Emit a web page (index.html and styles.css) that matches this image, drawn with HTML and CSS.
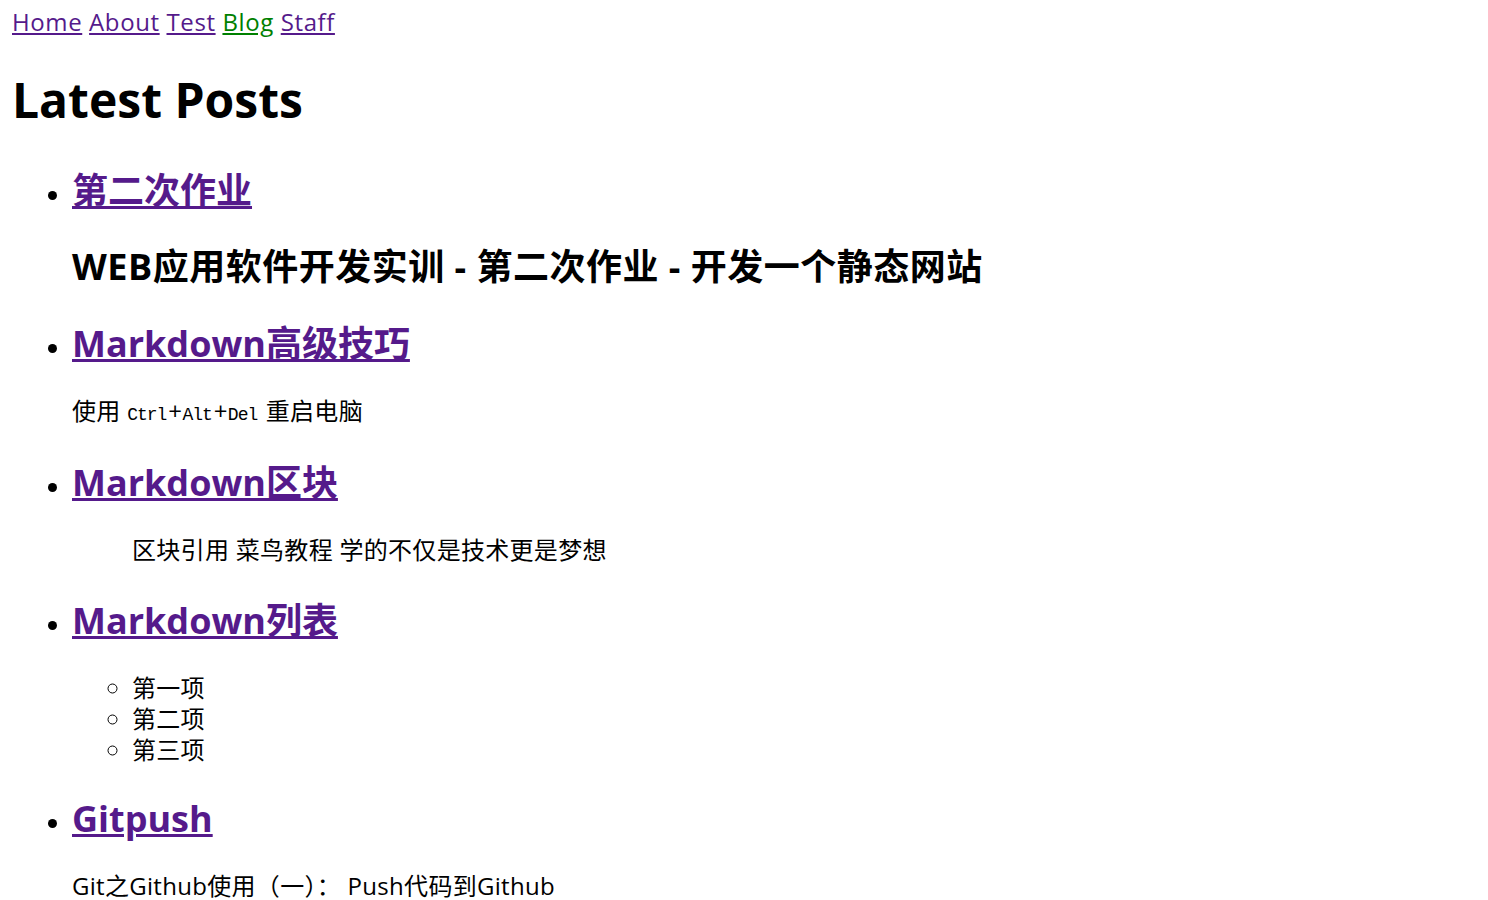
FILE: index.html
```html
<!DOCTYPE html>
<html lang="zh">
<head>
<meta charset="utf-8">
<title>Latest Posts</title>
<link rel="stylesheet" href="styles.css">
</head>
<body class="page">
<div class="nav"><a class="link" href="#">Home</a> <a class="link" href="#">About</a> <a class="link" href="#">Test</a> <a class="link link-blog" href="#">Blog</a> <a class="link" href="#">Staff</a></div>
<h1 class="title">Latest Posts</h1>
<ul class="posts">
  <li class="post">
    <h2 class="post-title"><a class="link" href="#">第二次作业</a></h2>
    <h2 class="post-title post-sub">WEB应用软件开发实训 - 第二次作业 - 开发一个静态网站</h2>
  </li>
  <li class="post">
    <h2 class="post-title"><a class="link" href="#">Markdown高级技巧</a></h2>
    <p class="text">使用 <kbd class="key">Ctrl</kbd>+<kbd class="key">Alt</kbd>+<kbd class="key">Del</kbd> 重启电脑</p>
  </li>
  <li class="post">
    <h2 class="post-title"><a class="link" href="#">Markdown区块</a></h2>
    <blockquote class="quote"><p class="text">区块引用 菜鸟教程 学的不仅是技术更是梦想</p></blockquote>
  </li>
  <li class="post">
    <h2 class="post-title"><a class="link" href="#">Markdown列表</a></h2>
    <ul class="sublist">
      <li class="subitem">第一项</li>
      <li class="subitem">第二项</li>
      <li class="subitem">第三项</li>
    </ul>
  </li>
  <li class="post">
    <h2 class="post-title"><a class="link" href="#">Gitpush</a></h2>
    <p class="text">Git之Github使用（一）： Push代码到Github</p>
  </li>
</ul>
</body>
</html>
```

FILE: styles.css
```css
.page {
  margin: 6px 12px 12px;
  font-family: "Open Sans", "Noto Sans CJK SC", sans-serif;
  font-size: 24px;
  line-height: 1.3;
  color: #000;
  background: #fff;
}

.nav {
  line-height: 1.3;
  letter-spacing: 0.6px;
}

.link {
  color: #551a8b;
  text-decoration: underline;
}

.link-blog {
  color: #008000;
}

.title {
  font-size: 48px;
  font-weight: 700;
  margin: 32px 0 36px;
  line-height: 1.3;
}

.posts {
  list-style: disc;
  margin: 24px 0;
  padding-left: 60px;
}

.post-title {
  font-size: 36px;
  font-weight: 700;
  margin: 30px 0 27px;
  line-height: 1.3;
}

.post-sub {
  letter-spacing: 0.5px;
}

.text {
  margin: 0 0 33px;
  letter-spacing: 0.3px;
}

.key {
  font-family: "Liberation Mono", monospace;
  font-size: 18px;
  letter-spacing: -1px;
  margin: 0 2px 0 0;
}

.quote {
  margin: 0 60px;
}

.sublist {
  list-style: circle;
  margin: 0;
  padding: 0 0 1px 60px;
  letter-spacing: 0.3px;
}

.subitem {
  line-height: 31px;
}
```
